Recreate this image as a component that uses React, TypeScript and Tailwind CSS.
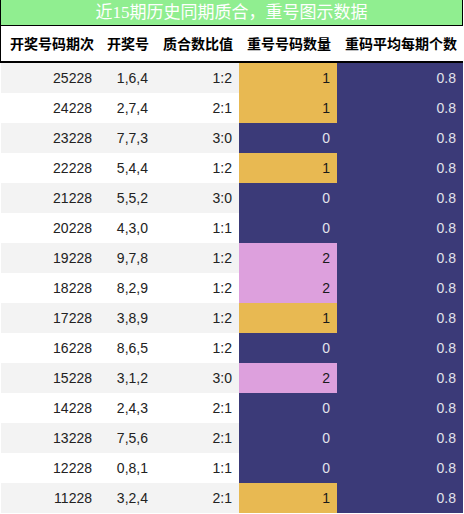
const rows: [string, string, string, number][] = [
  ["25228", "1,6,4", "1:2", 1],
  ["24228", "2,7,4", "2:1", 1],
  ["23228", "7,7,3", "3:0", 0],
  ["22228", "5,4,4", "1:2", 1],
  ["21228", "5,5,2", "3:0", 0],
  ["20228", "4,3,0", "1:1", 0],
  ["19228", "9,7,8", "1:2", 2],
  ["18228", "8,2,9", "1:2", 2],
  ["17228", "3,8,9", "1:2", 1],
  ["16228", "8,6,5", "1:2", 0],
  ["15228", "3,1,2", "3:0", 2],
  ["14228", "2,4,3", "2:1", 0],
  ["13228", "7,5,6", "2:1", 0],
  ["12228", "0,8,1", "1:1", 0],
  ["11228", "3,2,4", "2:1", 1],
];

const repeatCell: Record<number, string> = {
  0: "bg-[#3b3a78] text-[#e2e2ea]",
  1: "bg-[#e8b952] text-[#1a1a1a]",
  2: "bg-[#dda0dd] text-[#1a1a1a]",
};

const cols = "grid grid-cols-[98px_56px_84px_98px_126px]";

export default function App() {
  return (
    <div className="w-[463px] bg-white font-['Liberation_Sans','Noto_Sans_CJK_SC',sans-serif]">
      <div className="h-[26px] bg-[#90ee90] border-x border-b border-black flex items-center justify-center text-white text-[17px] leading-none font-['Liberation_Serif','Noto_Sans_CJK_SC',serif]">
        近15期历史同期质合，重号图示数据
      </div>
      <div className={`${cols} h-[37px] pl-px border-l border-black border-b-2 items-center text-[14px] font-bold text-black font-['Noto_Sans_CJK_SC',sans-serif]`}>
        <div className="text-right pr-[6px]">开奖号码期次</div>
        <div className="text-right pr-[7px]">开奖号</div>
        <div className="text-right pr-[7px]">质合数比值</div>
        <div className="text-right pr-[7px]">重号号码数量</div>
        <div className="text-right pr-[7px]">重码平均每期个数</div>
      </div>
      <div className="pl-px">
        {rows.map(([issue, nums, ratio, rep], i) => {
          const bg = i % 2 === 0 ? "bg-[#f3f3f3]" : "bg-white";
          return (
            <div key={issue} className={`${cols} h-[30px] text-[14px] leading-[30px]`}>
              <div className={`${bg} text-right pr-[7px] text-[#222]`}>{issue}</div>
              <div className={`${bg} text-right pr-[7px] text-[#222]`}>{nums}</div>
              <div className={`${bg} text-right pr-[7px] text-[#222]`}>{ratio}</div>
              <div className={`${repeatCell[rep]} text-right pr-[7px]`}>{rep}</div>
              <div className="bg-[#3b3a78] text-[#e2e2ea] text-right pr-[7px]">0.8</div>
            </div>
          );
        })}
      </div>
    </div>
  );
}
